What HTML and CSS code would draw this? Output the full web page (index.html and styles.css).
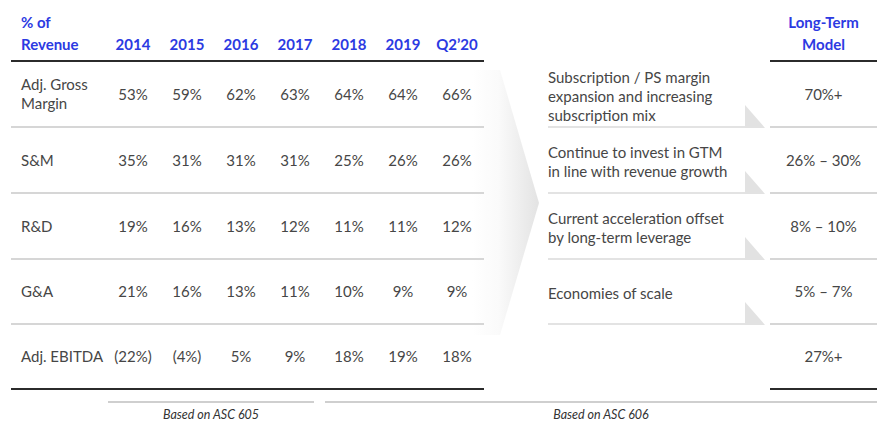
FILE: index.html
```html
<!DOCTYPE html>
<html lang="en">
<head>
<meta charset="utf-8">
<title>% of Revenue – Long-Term Model</title>
<link rel="stylesheet" href="styles.css">
</head>
<body>
<div class="page">
  <svg class="chevron" width="80" height="280" viewBox="0 0 80 280" aria-hidden="true">
    <defs>
      <linearGradient id="chev" x1="0" y1="0" x2="1" y2="0">
        <stop offset="0" stop-color="#ffffff"/>
        <stop offset="0.4" stop-color="#fafafa"/>
        <stop offset="1" stop-color="#e3e3e3"/>
      </linearGradient>
    </defs>
    <polygon points="0,0 28,0 67,133 28,265 0,265" fill="url(#chev)"/>
  </svg>

  <div class="board">
    <section class="hist">
      <div class="row head">
        <div class="label">% of<br>Revenue</div>
        <div>2014</div><div>2015</div><div>2016</div><div>2017</div><div>2018</div><div>2019</div><div>Q2’20</div>
      </div>
      <div class="row r1">
        <div class="label">Adj. Gross<br>Margin</div>
        <div>53%</div><div>59%</div><div>62%</div><div>63%</div><div>64%</div><div>64%</div><div>66%</div>
      </div>
      <div class="row r2">
        <div class="label">S&amp;M</div>
        <div>35%</div><div>31%</div><div>31%</div><div>31%</div><div>25%</div><div>26%</div><div>26%</div>
      </div>
      <div class="row r3">
        <div class="label">R&amp;D</div>
        <div>19%</div><div>16%</div><div>13%</div><div>12%</div><div>11%</div><div>11%</div><div>12%</div>
      </div>
      <div class="row r4">
        <div class="label">G&amp;A</div>
        <div>21%</div><div>16%</div><div>13%</div><div>11%</div><div>10%</div><div>9%</div><div>9%</div>
      </div>
      <div class="row r5 last">
        <div class="label">Adj. EBITDA</div>
        <div>(22%)</div><div>(4%)</div><div>5%</div><div>9%</div><div>18%</div><div>19%</div><div>18%</div>
      </div>
    </section>

    <section class="drivers">
      <div class="drow head"></div>
      <div class="drow r1 tab">Subscription / PS margin<br>expansion and increasing<br>subscription mix</div>
      <div class="drow r2 tab">Continue to invest in GTM<br>in line with revenue growth</div>
      <div class="drow r3 tab">Current acceleration offset<br>by long-term leverage</div>
      <div class="drow r4 tab">Economies of scale</div>
      <div class="drow r5"></div>
    </section>

    <section class="model">
      <div class="mrow head">Long-Term<br>Model</div>
      <div class="mrow r1">70%+</div>
      <div class="mrow r2">26% – 30%</div>
      <div class="mrow r3">8% – 10%</div>
      <div class="mrow r4">5% – 7%</div>
      <div class="mrow r5 last">27%+</div>
    </section>
  </div>

  <div class="bases">
    <div class="base b605">Based on ASC 605</div>
    <div class="base b606">Based on ASC 606</div>
  </div>
</div>
</body>
</html>
```

FILE: styles.css
```css
* { box-sizing: border-box; }

html, body {
  margin: 0;
  padding: 0;
  background: #ffffff;
}

body {
  font-family: Lato, "Open Sans", "Liberation Sans", sans-serif;
  font-size: 15px;
  color: #464646;
}

.page {
  position: relative;
  width: 894px;
  height: 430px;
  overflow: hidden;
}

.chevron {
  position: absolute;
  left: 472px;
  top: 70px;
  z-index: 0;
}

.board {
  position: relative;
  z-index: 1;
  display: flex;
  padding-left: 11px;
}

/* row heights shared by all three blocks */
.head { height: 62px; }
.r1, .r2, .r3 { height: 66px; }
.r4, .r5 { height: 65px; }

/* ---------- historical table ---------- */
.hist { width: 473px; }

.row {
  display: grid;
  grid-template-columns: 95px repeat(7, 54px);
  align-items: center;
  text-align: center;
  border-bottom: 2px solid #d6d6d6;
  line-height: 19px;
}

.row .label {
  text-align: left;
  padding-left: 10px;
}

.row.head {
  align-items: end;
  border-bottom-color: #2b2b2b;
  color: #2c3ae2;
  font-weight: 700;
  line-height: 22px;
  padding-bottom: 5px;
}

.row.last { border-bottom-color: #2b2b2b; }

/* ---------- drivers ---------- */
.drivers {
  width: 217px;
  margin-left: 64px;
}

.drow {
  position: relative;
  display: flex;
  align-items: center;
  line-height: 19px;
  padding-top: 2px;
}

.drow.tab::before {
  content: "";
  position: absolute;
  left: 0;
  right: 20px;
  bottom: 0;
  height: 2px;
  background: #e3e3e3;
}

.drow.tab::after {
  content: "";
  position: absolute;
  right: 0;
  bottom: 0;
  width: 20px;
  height: 23px;
  background: #e2e2e2;
  clip-path: polygon(0 0, 100% 100%, 0 100%);
}

/* ---------- long-term model ---------- */
.model {
  width: 107px;
  margin-left: 5px;
}

.mrow {
  display: flex;
  align-items: center;
  justify-content: center;
  text-align: center;
  border-bottom: 2px solid #d6d6d6;
  line-height: 19px;
}

.mrow.head {
  align-items: flex-end;
  border-bottom-color: #2b2b2b;
  color: #2c3ae2;
  font-weight: 700;
  line-height: 22px;
  padding-bottom: 5px;
}

.mrow.last { border-bottom-color: #2b2b2b; }

/* ---------- bottom notes ---------- */
.bases {
  display: flex;
  margin-top: 11px;
  padding-left: 108px;
}

.base {
  border-top: 2px solid #cfcfcf;
  text-align: center;
  font-size: 12.5px;
  font-style: italic;
  color: #333333;
  padding-top: 5px;
  line-height: 14px;
}

.b605 { width: 206px; }
.b606 { width: 552px; margin-left: 11px; }
```
